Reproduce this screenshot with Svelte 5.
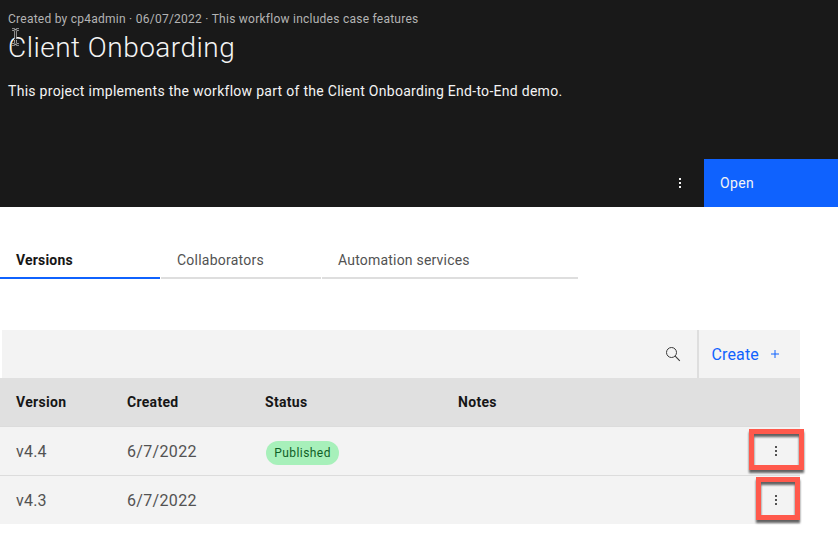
<script>
  const tabs = [
    { label: 'Versions', width: 160, spacing: 0.18, active: true },
    { label: 'Collaborators', width: 160, spacing: 0.23 },
    { label: 'Automation services', width: 256, spacing: 0.2 }
  ];
  const rows = [
    { version: 'v4.4', created: '6/7/2022', status: 'Published' },
    { version: 'v4.3', created: '6/7/2022', status: '' }
  ];
</script>

{#snippet dots()}
  <svg class="dots" width="16" height="16" viewBox="0 0 16 16" fill="currentColor" shape-rendering="crispEdges">
    <rect x="7" y="3" width="2" height="2" />
    <rect x="7" y="7" width="2" height="2" />
    <rect x="7" y="11" width="2" height="2" />
  </svg>
{/snippet}

<main>
  <header>
    <p class="meta"><span>Created by cp4admin · 06/07/2022 · This workflow includes case features</span></p>
    <h1><span>Client Onboarding</span></h1>
    <p class="desc"><span>This project implements the workflow part of the Client Onboarding End-to-End demo.</span></p>
    <div class="actions">
      <button class="more" aria-label="More">{@render dots()}</button>
      <button class="open"><span>Open</span></button>
    </div>
    <svg class="cursor" width="9" height="18" viewBox="0 0 9 18" fill="none">
      <path d="M1 1.5H3L4.5 3L6 1.5H8M4.5 3V15M1 16.5H3L4.5 15L6 16.5H8M3 11.5H6" stroke="#aaa" stroke-width="2.6" />
      <path d="M1 1.5H3L4.5 3L6 1.5H8M4.5 3V15M1 16.5H3L4.5 15L6 16.5H8M3 11.5H6" stroke="#222" stroke-width="1" />
    </svg>
  </header>

  <nav>
    {#each tabs as tab}
      <button class="tab" class:active={tab.active} style="width: {tab.width}px; letter-spacing: {tab.spacing}px">
        <span>{tab.label}</span>
      </button>
    {/each}
  </nav>

  <section>
    <div class="toolbar">
      <button class="search" aria-label="Search">
        <svg width="16" height="16" viewBox="0 0 16 16" fill="none" stroke="#393939">
          <circle cx="6.5" cy="6.5" r="5" />
          <path d="M10.2 10.2L14.8 14.8" stroke-width="1.1" />
        </svg>
      </button>
      <button class="create">
        <span>Create</span>
        <svg width="16" height="16" viewBox="0 0 16 16" fill="none" stroke="#0f62fe"><path d="M8 4V12M4 8H12" /></svg>
      </button>
    </div>
    <div class="row head">
      <div><span>Version</span></div>
      <div><span>Created</span></div>
      <div><span>Status</span></div>
      <div><span>Notes</span></div>
    </div>
    {#each rows as row, i}
      <div class="row">
        <div><span class="version">{row.version}</span></div>
        <div><span class="date">{row.created}</span></div>
        <div>{#if row.status}<span class="tag">{row.status}</span>{/if}</div>
        <div></div>
        <button class="menu" aria-label="Options">
          {@render dots()}
          <i class="mark" class:small={i === 1}></i>
        </button>
      </div>
    {/each}
  </section>
</main>

<style>
  :global(body) { background: #fff; }
  main {
    width: 838px;
    height: 545px;
    overflow: hidden;
    font-family: Roboto, "Liberation Sans", sans-serif;
    font-size: 14px;
    color: #161616;
    background: #fff;
  }
  h1, p { margin: 0; white-space: nowrap; }
  button { border: 0; padding: 0; margin: 0; background: none; font: inherit; color: inherit; }
  svg { display: block; }
  header {
    position: relative;
    display: flex;
    flex-direction: column;
    box-sizing: border-box;
    height: 207px;
    padding: 10px 0 0 8px;
    background: #191919;
    color: #f4f4f4;
  }
  .meta { font-size: 12px; line-height: 18px; color: #b4b4b4; letter-spacing: 0.25px; }
  h1 { font-size: 28px; font-weight: 300; line-height: 40px; letter-spacing: 0.48px; }
  .desc { line-height: 20px; margin-top: 13px; letter-spacing: 0.285px; }
  .actions { display: flex; height: 48px; margin-top: auto; justify-content: flex-end; }
  .more { width: 48px; display: grid; place-items: center; }
  .open {
    width: 134px;
    padding-left: 16px;
    background: #0f62fe;
    text-align: left;
    letter-spacing: 0.35px;
  }
  .cursor { position: absolute; left: 11px; top: 28px; }
  nav { display: flex; gap: 1px; padding-top: 34px; }
  .tab {
    box-sizing: border-box;
    height: 38px;
    padding: 2px 0 0 16px;
    border-bottom: 2px solid #dedede;
    line-height: 34px;
    text-align: left;
    color: #525252;
  }
  .tab.active { font-weight: 700; color: #161616; border-color: #0f62fe; }
  section { width: 800px; margin-top: 51px; }
  .toolbar { display: flex; justify-content: flex-end; height: 48px; margin-left: 2px; background: #f3f3f3; }
  .search { width: 48px; display: grid; place-items: center; }
  .create {
    box-sizing: border-box;
    width: 103px;
    padding-left: 12.5px;
    border-left: 2px solid #dedede;
    display: flex;
    align-items: center;
    gap: 7.5px;
    font-size: 16px;
    letter-spacing: 0.15px;
    color: #0f62fe;
  }
  .row {
    display: grid;
    grid-template-columns: 111px 138px 193px 294px 48px;
    box-sizing: border-box;
    height: 49px;
    padding-left: 16px;
    align-items: center;
    background: #f3f3f3;
    border-bottom: 1px solid #dcdcdc;
    font-size: 16px;
    color: #525252;
  }
  .row:last-child { height: 48px; border-bottom: 0; }
  .head { background: #e0e0e0; font-size: 14px; font-weight: 700; color: #161616; letter-spacing: 0.3px; }
  .version { letter-spacing: 0.2px; }
  .date { letter-spacing: 0.33px; }
  .tag {
    display: block;
    width: 73px;
    height: 24px;
    margin: 3px 0 0 1px;
    border-radius: 12px;
    background: #a7f0ba;
    color: #0e6027;
    font-size: 12px;
    line-height: 24px;
    text-align: center;
    letter-spacing: 0.45px;
  }
  .menu { position: relative; height: 48px; display: grid; place-items: center; }
  .mark {
    position: absolute;
    box-sizing: border-box;
    left: -3px;
    top: 2px;
    width: 55px;
    height: 41px;
    border: 5px solid #ff594c;
    filter: drop-shadow(0 3px 1px rgb(0 0 0 / 0.6));
  }
  .mark.small { left: 4px; top: 1px; width: 44px; height: 43px; }
</style>
